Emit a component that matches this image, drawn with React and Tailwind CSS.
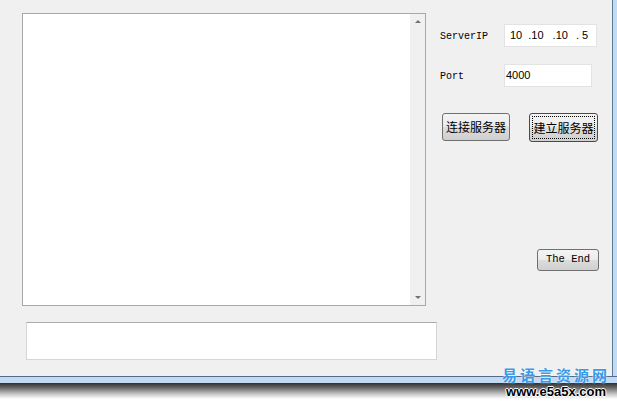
import React from "react";

const mono = { fontFamily: '"Liberation Mono", "DejaVu Sans Mono", monospace' };
const sans = { fontFamily: '"Liberation Sans", Arial, sans-serif' };
const cjk = { fontFamily: '"Noto Sans CJK SC", "Noto Sans", sans-serif' };

function Btn({ children, focused, className, style }) {
  return (
    <div
      className={`flex items-center justify-center rounded-[3px] border ${
        focused ? "border-[#4a4a4a]" : "border-[#707070]"
      } bg-[linear-gradient(#f4f4f4_0%,#ebebeb_48%,#dcdcdc_52%,#cfcfcf_100%)] text-black ${className}`}
      style={style}
    >
      {focused ? (
        <div className="flex h-full w-full items-center justify-center p-[2px]">
          <div className="flex h-full w-full items-center justify-center border border-dotted border-black">
            {children}
          </div>
        </div>
      ) : (
        children
      )}
    </div>
  );
}

export default function App() {
  return (
    <div className="relative h-[405px] w-[617px] overflow-hidden bg-white">
      <div className="flex h-[376px]">
        <div className="flex w-[612px] bg-[#f0f0f0]">
          {/* left column */}
          <div className="flex w-[418px] flex-col pl-[22px] pt-[13px]">
            <div className="flex h-[293px] w-[404px] border border-[#a8a8a8] bg-white">
              <div className="flex-1" />
              <div className="flex w-[15px] flex-col items-center justify-between bg-[#f0f0f0] py-[6px]">
                <div className="h-0 w-0 border-x-[3px] border-b-[3px] border-x-transparent border-b-[#707070]" />
                <div className="h-0 w-0 border-x-[3px] border-t-[3px] border-x-transparent border-t-[#707070]" />
              </div>
            </div>
            <div className="ml-[4px] mt-[16px] h-[38px] w-[411px] border border-[#d6d6d6] border-t-[#acacac] bg-white" />
          </div>
          {/* right column */}
          <div className="flex flex-col pl-[22px] pt-[24px]">
            <div className="flex h-[23px] items-center">
              <div className="mt-[2px] w-[64px] text-[10px] text-black" style={mono}>ServerIP</div>
              <div
                className="flex h-[23px] w-[93px] items-center border border-[#e3e3e3] bg-white pl-[5px] text-[11px] text-black"
                style={sans}
              >
                <span>10</span>
                <span className="ml-[6px]">.</span>
                <span>10</span>
                <span className="ml-[9px]">.</span>
                <span>10</span>
                <span className="ml-[8px]">.</span>
                <span className="ml-[3px]">5</span>
              </div>
            </div>
            <div className="mt-[17px] flex h-[23px] items-center">
              <div className="mt-[2px] w-[64px] text-[10px] text-black" style={mono}>Port</div>
              <div
                className="flex h-[23px] w-[88px] items-center border border-[#e3e3e3] bg-white pl-[1px] text-[11px] text-black"
                style={sans}
              >
                4000
              </div>
            </div>
            <div className="mt-[26px] flex items-start">
              <Btn className="ml-[2px] h-[28px] w-[68px] text-[12px]" style={cjk}>连接服务器</Btn>
              <Btn focused className="ml-[19px] h-[29px] w-[69px] text-[12px]" style={cjk}>建立服务器</Btn>
            </div>
            <div className="mt-[107px] flex">
              <Btn className="ml-[97px] h-[22px] w-[62px] text-[10.5px]" style={mono}>The End</Btn>
            </div>
          </div>
        </div>
        <div className="w-[5px] border-l border-[#5a7a99] bg-[#c2daf2]" />
      </div>
      <div className="h-[7px] border-t border-[#4f6d8a] bg-[#c2daf2]" />
      <div className="h-[16px] bg-[linear-gradient(#2e2e2e,#6a6a6a_30%,#c8c8c8_70%,#ffffff)]" />

      {/* watermark */}
      <div className="absolute left-[500px] top-[366px] flex w-[112px] flex-col items-center">
        <div
          className="text-[15px] font-bold leading-[18px] tracking-[3px] text-[#3a9ae8]"
          style={{ ...cjk, textShadow: "0 0 2px #fff" }}
        >
          易语言资源网
        </div>
        <div
          className="text-[13px] font-bold leading-[15px] text-black"
          style={{ ...sans, textShadow: "1px 0 0 #fff, -1px 0 0 #fff, 0 1px 0 #fff, 0 -1px 0 #fff" }}
        >
          www.e5a5x.com
        </div>
      </div>
    </div>
  );
}
